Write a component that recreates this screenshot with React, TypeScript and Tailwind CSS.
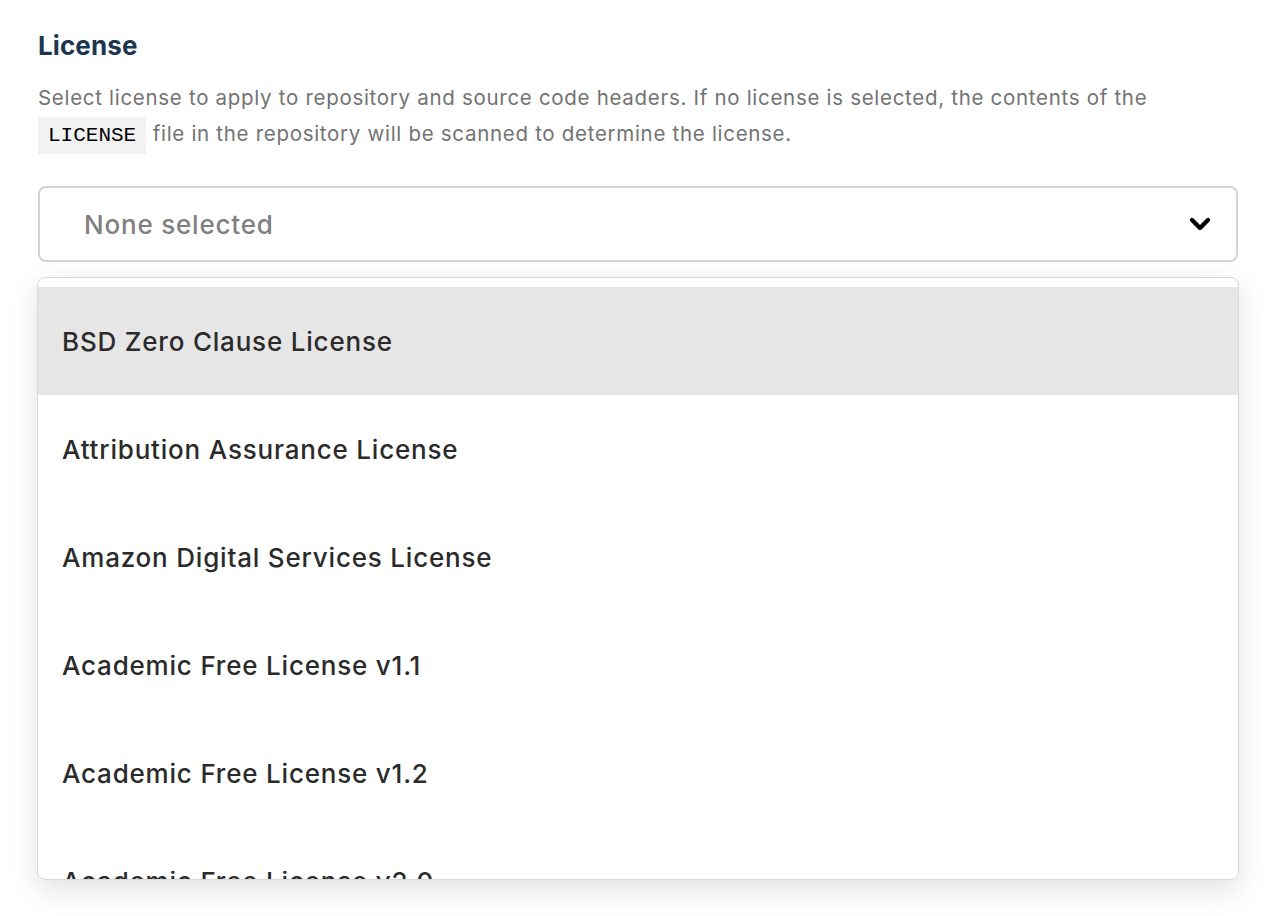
import { ChevronDown } from "lucide-react";

const licenses = [
  "BSD Zero Clause License",
  "Attribution Assurance License",
  "Amazon Digital Services License",
  "Academic Free License v1.1",
  "Academic Free License v1.2",
  "Academic Free License v2.0",
];

export default function App() {
  return (
    <div
      className="min-h-screen bg-white px-[38px] pt-[30px]"
      style={{ fontFamily: "Inter, 'Noto Sans', sans-serif" }}
    >
      <h2 className="text-[26px] font-bold leading-[32px] tracking-[0.1px] text-[#1d3650]">License</h2>
      <p className="mt-[18px] text-[20.5px] leading-[36px] tracking-[0.7px] text-[#737373]">
        Select license to apply to repository and source code headers. If no license is selected, the contents of the{" "}
        <br />
        <code
          className="bg-[#f2f2f2] px-[10px] py-[7px] text-[21px] tracking-normal text-black"
          style={{ fontFamily: "'Liberation Mono', monospace" }}
        >
          LICENSE
        </code>{" "}
        file in the repository will be scanned to determine the license.
      </p>

      <div className="mt-[32px] flex h-[76px] w-[1200px] items-center justify-between rounded-[8px] border-2 border-[#d4d4d4] pl-[44px] pr-[20px]">
        <span className="text-[26px] font-medium tracking-[0.8px] text-[#808080]">None selected</span>
        <ChevronDown className="h-8 w-8 text-black" strokeWidth={3.2} />
      </div>

      <div className="mt-[15px] h-[603px] w-[1202px] -ml-px overflow-hidden rounded-[8px] border border-[#d9d9d9] pt-[9px] shadow-[0_10px_30px_rgba(0,0,0,0.12)]">
        {licenses.map((name, i) => (
          <div
            key={name}
            className={`flex h-[108px] items-center px-[24px] text-[26px] font-medium tracking-[0.8px] text-[#2b2b2b] ${i === 0 ? "bg-[#e6e6e6]" : ""}`}
          >
            {name}
          </div>
        ))}
      </div>
    </div>
  );
}
